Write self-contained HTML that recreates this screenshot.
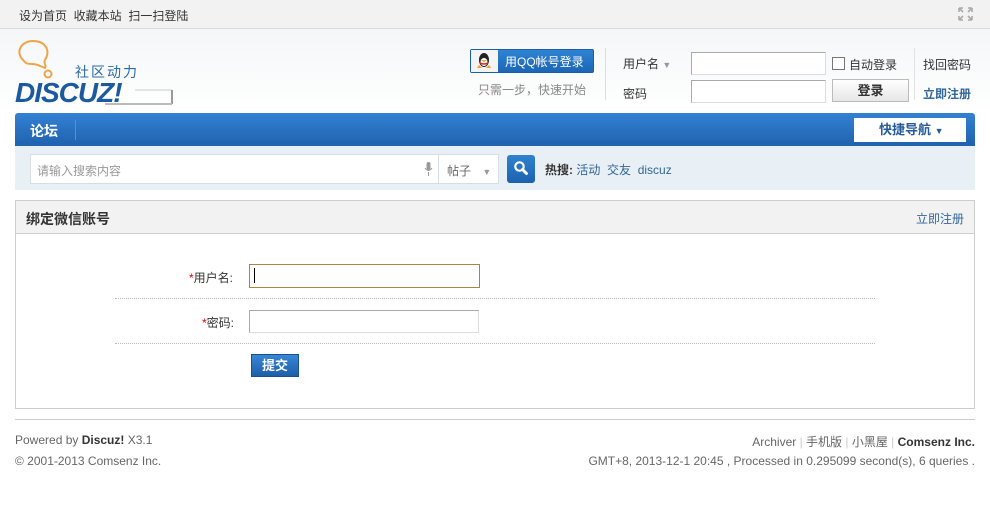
<!DOCTYPE html>
<html><head><meta charset="utf-8">
<style>
*{margin:0;padding:0;box-sizing:border-box}
body{width:990px;height:513px;background:#fff;font:12px "Liberation Sans","Noto Sans CJK SC",sans-serif;color:#333;position:relative;overflow:hidden}
.a{position:absolute;white-space:nowrap}
a{color:#336699;text-decoration:none}
</style></head><body>
<div class="a" style="left:0;top:0;width:990px;height:29px;background:#f2f2f2;border-bottom:1px solid #dcdcdc"></div>
<div class="a" style="left:19px;top:7px;font-size:12px;color:#333">设为首页&nbsp; 收藏本站&nbsp; 扫一扫登陆</div>
<svg class="a" style="left:958px;top:7px" width="15" height="14" viewBox="0 0 15 14"><g stroke="#aaa" stroke-width="1.6" fill="none"><path d="M1 1l4 4M1 1h4M1 1v4M14 1l-4 4M14 1h-4M14 1v4M1 13l4-4M1 13h4M1 13v-4M14 13l-4-4M14 13h-4M14 13v-4"/></g></svg>
<div class="a" style="left:0;top:29px;width:990px;height:84px;background:linear-gradient(#f4f6f8,#fff)"></div>
<!-- logo -->
<svg class="a" style="left:15px;top:38px" width="160" height="70" viewBox="0 0 160 70">
<path d="M8 22 C0 14 6 3 18 3 C30 3 36 12 30 22 C28 25 32 27 30 30 C25 28 22 26 17 26 C12 26 10 25 8 22Z" fill="none" stroke="#f0a44a" stroke-width="2"/>
<circle cx="33" cy="36" r="3.5" fill="none" stroke="#f0a44a" stroke-width="2"/>
<line x1="120" y1="52" x2="157" y2="52" stroke="#ccc"/><line x1="157" y1="52" x2="157" y2="66" stroke="#999" stroke-width="2"/><line x1="90" y1="66" x2="157" y2="66" stroke="#bbb" stroke-width="2"/>
<text x="60" y="39" font-family="Liberation Sans,Noto Sans CJK SC,sans-serif" font-size="14" fill="#2a6aa8" letter-spacing="2">社区动力</text>
<text x="0" y="64" font-family="Liberation Sans,sans-serif" font-size="28" font-weight="bold" font-style="italic" fill="#1c5aa0" letter-spacing="-1">DISCUZ!</text>
</svg>
<!-- QQ -->
<div class="a" style="left:470px;top:49px;width:124px;height:24px;border:1px solid #1b5ea3;background:linear-gradient(#2f83d3,#1d66b6);border-radius:2px"></div>
<div class="a" style="left:471px;top:50px;width:27px;height:22px;background:#f4f4f4"></div>
<svg class="a" style="left:476px;top:51px" width="16" height="18" viewBox="0 0 16 18"><ellipse cx="8" cy="9" rx="5" ry="7" fill="#222"/><ellipse cx="8" cy="11" rx="3.5" ry="4" fill="#fff"/><path d="M3 14l-2 3h5M13 14l2 3h-5" fill="#f4a020"/><path d="M5 9h6l-3 2z" fill="#f4a020"/><path d="M4 12q4 2 8 0" stroke="#d22" stroke-width="1.5" fill="none"/></svg>
<div class="a" style="left:505px;top:53px;color:#fff;font-size:12px">用QQ帐号登录</div>
<div class="a" style="left:478px;top:81px;color:#888">只需一步，快速开始</div>
<div class="a" style="left:605px;top:48px;width:1px;height:52px;background:#ddd"></div>
<div class="a" style="left:623px;top:55px">用户名 <span style="color:#999;font-size:9px">▼</span></div>
<div class="a" style="left:623px;top:85px">密码</div>
<div class="a" style="left:691px;top:52px;width:135px;height:23px;border:1px solid #aaa;border-right-color:#ddd;border-bottom-color:#ddd;background:#fff"></div>
<div class="a" style="left:691px;top:80px;width:135px;height:23px;border:1px solid #aaa;border-right-color:#ddd;border-bottom-color:#ddd;background:#fff"></div>
<div class="a" style="left:832px;top:57px;width:13px;height:13px;border:1px solid #777;background:#fff"></div>
<div class="a" style="left:849px;top:56px">自动登录</div>
<div class="a" style="left:832px;top:79px;width:77px;height:23px;border:1px solid #bbb;background:linear-gradient(#fff,#e6e6e6);text-align:center;line-height:21px;font-weight:bold;font-size:13px">登录</div>
<div class="a" style="left:914px;top:48px;width:1px;height:52px;background:#e2e2e2"></div>
<div class="a" style="left:923px;top:56px">找回密码</div>
<div class="a" style="left:923px;top:85px;font-weight:bold"><a>立即注册</a></div>
<!-- nav -->
<div class="a" style="left:15px;top:113px;width:960px;height:33px;background:linear-gradient(#3381d3,#1f62ae);border-radius:3px 3px 0 0"></div>
<div class="a" style="left:30px;top:121px;color:#fff;font-weight:bold;font-size:14px">论坛</div>
<div class="a" style="left:75px;top:120px;width:1px;height:20px;background:#5a8fc8"></div>
<div class="a" style="left:854px;top:118px;width:112px;height:24px;background:#fff;color:#245b9b;font-weight:bold;font-size:13px;padding-left:25px;line-height:24px">快捷导航 <span style="font-size:9px">▼</span></div>
<div class="a" style="left:15px;top:146px;width:960px;height:44px;background:#e8eff5"></div>
<div class="a" style="left:30px;top:154px;width:469px;height:30px;border:1px solid #d5dde5;background:#fff"></div>
<div class="a" style="left:438px;top:154px;width:1px;height:30px;background:#d5dde5"></div>
<div class="a" style="left:37px;top:162px;color:#999">请输入搜索内容</div>
<svg class="a" style="left:424px;top:162px" width="9" height="14" viewBox="0 0 9 14"><rect x="2.5" y="0" width="4" height="8" rx="2" fill="#999"/><path d="M1 6q3.5 5 7 0M4.5 10v4" stroke="#999" fill="none"/></svg>
<div class="a" style="left:447px;top:162px;color:#666">帖子 <span style="color:#999;font-size:9px;margin-left:8px">▼</span></div>
<div class="a" style="left:507px;top:155px;width:28px;height:28px;border-radius:3px;background:linear-gradient(#2f82cf,#1b62ad)"></div>
<svg class="a" style="left:513px;top:160px" width="16" height="16" viewBox="0 0 16 16"><circle cx="6.5" cy="6.5" r="4.2" stroke="#fff" stroke-width="2.2" fill="none"/><path d="M9.5 9.5l4 4" stroke="#fff" stroke-width="3" stroke-linecap="round"/></svg>
<div class="a" style="left:545px;top:161px"><b>热搜:</b> <a>活动</a>&nbsp; <a>交友</a>&nbsp; <a>discuz</a></div>
<!-- box -->
<div class="a" style="left:15px;top:200px;width:960px;height:209px;border:1px solid #cdcdcd"></div>
<div class="a" style="left:16px;top:201px;width:958px;height:33px;background:#f2f2f2;border-bottom:1px solid #cdcdcd"></div>
<div class="a" style="left:26px;top:209px;font-weight:bold;font-size:14px;color:#333">绑定微信账号</div>
<div class="a" style="left:916px;top:210px"><a>立即注册</a></div>
<div class="a" style="left:189px;top:269px"><span style="color:#e00">*</span>用户名:</div>
<div class="a" style="left:249px;top:264px;width:231px;height:24px;border:1px solid #a5873d;background:#fff"></div>
<div class="a" style="left:254px;top:268px;width:1px;height:15px;background:#000"></div>
<div class="a" style="left:115px;top:298px;width:760px;border-top:1px dotted #bbb"></div>
<div class="a" style="left:202px;top:314px"><span style="color:#e00">*</span>密码:</div>
<div class="a" style="left:249px;top:310px;width:230px;height:23px;border:1px solid #aaa;border-right-color:#ddd;border-bottom-color:#ddd;background:#fff"></div>
<div class="a" style="left:115px;top:343px;width:760px;border-top:1px dotted #bbb"></div>
<div class="a" style="left:251px;top:354px;width:48px;height:23px;border:1px solid #1b4f8f;background:linear-gradient(#3787d6,#1d5ea8);color:#fff;font-weight:bold;font-size:13px;text-align:center;line-height:21px">提交</div>
<!-- footer -->
<div class="a" style="left:15px;top:419px;width:960px;height:1px;background:#cdcdcd"></div>
<div class="a" style="left:15px;top:433px;color:#666">Powered by <b style="color:#333">Discuz!</b> X3.1</div>
<div class="a" style="left:15px;top:454px;color:#666">© 2001-2013 Comsenz Inc.</div>
<div class="a" style="right:15px;top:433px;color:#666">Archiver <span style="color:#ccc">|</span> 手机版 <span style="color:#ccc">|</span> 小黑屋 <span style="color:#ccc">|</span> <b style="color:#333">Comsenz Inc.</b></div>
<div class="a" style="right:15px;top:454px;color:#666">GMT+8, 2013-12-1 20:45 , Processed in 0.295099 second(s), 6 queries .</div>
</body></html>
